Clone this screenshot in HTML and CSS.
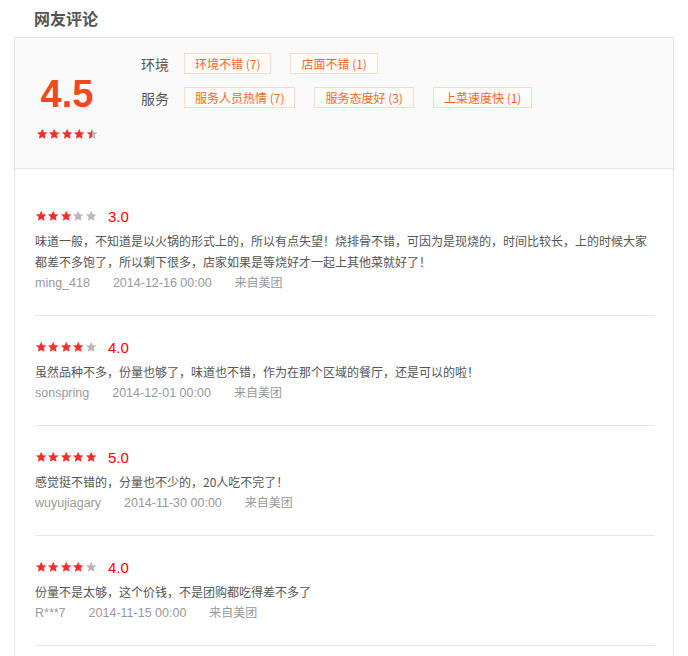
FILE: index.html
```html
<!DOCTYPE html>
<html lang="zh-CN">
<head>
  <meta charset="UTF-8" />
  <meta name="viewport" content="width=device-width, initial-scale=1.0"/>
  <title>网友评论</title>
  <link rel="stylesheet" href="styles.css">
</head>
<body>
  <svg class="svg-defs" width="0" height="0" aria-hidden="true">
    <defs>
      <symbol id="star" viewBox="0 0 24 24">
        <polygon points="12,1.5 15.1,8.4 22.6,9.2 17,14.2 18.6,21.6 12,17.8 5.4,21.6 7,14.2 1.4,9.2 8.9,8.4"/>
      </symbol>
      <linearGradient id="half-star">
        <stop offset="50%" stop-color="#f2302b"/>
        <stop offset="50%" stop-color="#b8b8b8"/>
      </linearGradient>
    </defs>
  </svg>

  <div class="page">
    <h2 class="page-title">网友评论</h2>

    <div class="comment-box">
      <div class="summary">
        <div class="summary-score">
          <div class="score-big">4.5</div>
          <div class="stars">
            <svg class="star on"><use href="#star"/></svg>
            <svg class="star on"><use href="#star"/></svg>
            <svg class="star on"><use href="#star"/></svg>
            <svg class="star on"><use href="#star"/></svg>
            <svg class="star half"><use href="#star"/></svg>
          </div>
        </div>
        <div class="summary-tags">
          <div class="tag-row">
            <span class="tag-label">环境</span>
            <span class="tag">环境不错 (7)</span>
            <span class="tag">店面不错 (1)</span>
          </div>
          <div class="tag-row">
            <span class="tag-label">服务</span>
            <span class="tag">服务人员热情 (7)</span>
            <span class="tag">服务态度好 (3)</span>
            <span class="tag">上菜速度快 (1)</span>
          </div>
        </div>
      </div>

      <ul class="review-list">
        <li class="review">
          <div class="review-rating">
            <span class="stars">
              <svg class="star on"><use href="#star"/></svg>
              <svg class="star on"><use href="#star"/></svg>
              <svg class="star on"><use href="#star"/></svg>
              <svg class="star off"><use href="#star"/></svg>
              <svg class="star off"><use href="#star"/></svg>
            </span>
            <span class="review-score">3.0</span>
          </div>
          <p class="review-text">味道一般，不知道是以火锅的形式上的，所以有点失望！烧排骨不错，可因为是现烧的，时间比较长，上的时候大家都差不多饱了，所以剩下很多，店家如果是等烧好才一起上其他菜就好了！</p>
          <div class="review-meta">
            <span class="meta-user">ming_418</span>
            <span class="meta-time">2014-12-16 00:00</span>
            <span class="meta-from">来自美团</span>
          </div>
        </li>
        <li class="review">
          <div class="review-rating">
            <span class="stars">
              <svg class="star on"><use href="#star"/></svg>
              <svg class="star on"><use href="#star"/></svg>
              <svg class="star on"><use href="#star"/></svg>
              <svg class="star on"><use href="#star"/></svg>
              <svg class="star off"><use href="#star"/></svg>
            </span>
            <span class="review-score">4.0</span>
          </div>
          <p class="review-text">虽然品种不多，份量也够了，味道也不错，作为在那个区域的餐厅，还是可以的啦！</p>
          <div class="review-meta">
            <span class="meta-user">sonspring</span>
            <span class="meta-time">2014-12-01 00:00</span>
            <span class="meta-from">来自美团</span>
          </div>
        </li>
        <li class="review">
          <div class="review-rating">
            <span class="stars">
              <svg class="star on"><use href="#star"/></svg>
              <svg class="star on"><use href="#star"/></svg>
              <svg class="star on"><use href="#star"/></svg>
              <svg class="star on"><use href="#star"/></svg>
              <svg class="star on"><use href="#star"/></svg>
            </span>
            <span class="review-score">5.0</span>
          </div>
          <p class="review-text">感觉挺不错的，分量也不少的，20人吃不完了！</p>
          <div class="review-meta">
            <span class="meta-user">wuyujiagary</span>
            <span class="meta-time">2014-11-30 00:00</span>
            <span class="meta-from">来自美团</span>
          </div>
        </li>
        <li class="review">
          <div class="review-rating">
            <span class="stars">
              <svg class="star on"><use href="#star"/></svg>
              <svg class="star on"><use href="#star"/></svg>
              <svg class="star on"><use href="#star"/></svg>
              <svg class="star on"><use href="#star"/></svg>
              <svg class="star off"><use href="#star"/></svg>
            </span>
            <span class="review-score">4.0</span>
          </div>
          <p class="review-text">份量不是太够，这个价钱，不是团购都吃得差不多了</p>
          <div class="review-meta">
            <span class="meta-user">R***7</span>
            <span class="meta-time">2014-11-15 00:00</span>
            <span class="meta-from">来自美团</span>
          </div>
        </li>
      </ul>
    </div>
  </div>
</body>
</html>
```

FILE: styles.css
```css
body {
  margin: 0;
  font-family: "Noto Sans CJK SC", "Microsoft YaHei", sans-serif;
  font-size: 12px;
  color: #555;
  background: #fff;
}
.svg-defs {
  position: absolute;
  width: 0;
  height: 0;
  overflow: hidden;
}
.page {
  padding: 0 14px;
}
.page-title {
  margin: 0 0 1px;
  padding-left: 20px;
  font-size: 16px;
  line-height: 36px;
  font-weight: bold;
  color: #555;
}
.comment-box {
  border: 1px solid #e5e5e5;
}

/* summary */
.summary {
  display: flex;
  padding-left: 20px;
  background: #fafafa;
  border-bottom: 1px solid #e8e8e8;
}
.summary-score {
  width: 64px;
  margin-right: 42px;
  padding: 34px 0 28px;
  text-align: center;
}
.score-big {
  font-family: "Liberation Sans", Arial, sans-serif;
  font-size: 38px;
  font-weight: bold;
  line-height: 44px;
  color: #f0481f;
}
.summary-score .stars {
  margin-top: 12px;
  justify-content: center;
}
.summary-tags {
  padding-top: 15px;
}
.tag-row {
  display: flex;
  align-items: center;
}
.tag-row + .tag-row {
  margin-top: 13px;
}
.tag-label {
  width: 28px;
  margin-right: 15px;
  font-size: 14px;
  color: #555;
}
.tag {
  margin-right: 19px;
  padding: 0 10px;
  line-height: 19px;
  border: 1px solid #fbd9c2;
  background: #fffdfb;
  color: #f7661f;
}

/* stars */
.stars {
  display: flex;
}
.star {
  width: 12.4px;
  height: 12px;
}
.star.on { fill: #f2302b; }
.star.off { fill: #b8b8b8; }
.star.half { fill: url(#half-star); }

/* reviews */
.review-list {
  list-style: none;
  margin: 0;
  padding: 16px 18px 20px 20px;
}
.review {
  padding: 21px 0 23px;
  border-bottom: 1px solid #e8e8e8;
}
.review-rating {
  display: flex;
  align-items: center;
  height: 20px;
}
.review-score {
  margin-left: 11px;
  font-family: "Liberation Sans", Arial, sans-serif;
  font-size: 15px;
  color: #f00;
}
.review-text {
  margin: 4px 0 0;
  line-height: 21px;
}
.review-meta {
  display: flex;
  align-items: baseline;
  height: 20px;
  font-family: "Liberation Sans", "Noto Sans CJK SC", sans-serif;
  font-size: 12.5px;
  color: #999;
}
.review-meta span {
  margin-right: 23px;
  line-height: 20px;
}
.review-meta .meta-from {
  font-family: "Noto Sans CJK SC", sans-serif;
  font-size: 12px;
}
```
